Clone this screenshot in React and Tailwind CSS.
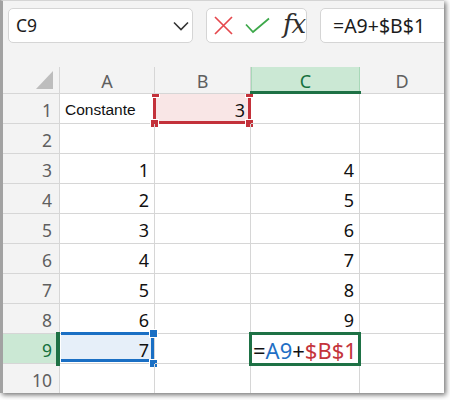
import React from "react";

const GRID = "border-[#d6d6d6]";
const NUM = "font-['Noto_Sans',sans-serif]";

function Handle({ className }) {
  return <div className={`absolute w-[9px] h-[9px] border border-white ${className}`} />;
}

const data = [
  ["Constante", "3", ""],
  ["", "", ""],
  ["1", "", "4"],
  ["2", "", "5"],
  ["3", "", "6"],
  ["4", "", "7"],
  ["5", "", "8"],
  ["6", "", "9"],
  ["7", "", "F"],
  ["", "", ""],
];

export default function App() {
  return (
    <div className="w-[450px] h-[400px] bg-white overflow-hidden">
      <div className="w-[444px] h-[393px] bg-white border-l-[3px] border-l-[#a2a2a2] border-t border-t-[#d4d4d4] shadow-[2px_2px_5px_rgba(0,0,0,0.55)] overflow-hidden flex flex-col">
        {/* toolbar */}
        <div className={`h-[66px] shrink-0 bg-[#f3f3f3] flex items-start pt-[7px] pl-[5px] ${NUM}`}>
          <div className="w-[185px] h-[35px] shrink-0 bg-white border border-[#d5d5d5] rounded-[5px] flex items-center justify-between pl-[7px] pr-[3px]">
            <span className="text-[17.5px] text-[#1b1b1b] leading-none">C9</span>
            <svg width="16" height="10" viewBox="0 0 16 10">
              <path d="M1 1.5 L8 8.5 L15 1.5" fill="none" stroke="#333" strokeWidth="1.6" />
            </svg>
          </div>
          <div className="ml-[13px] w-[101px] h-[35px] shrink-0 bg-white border border-[#d5d5d5] rounded-[5px] flex items-center pl-[7px]">
            <svg width="19" height="19" viewBox="0 0 19 19">
              <path d="M1 1 L18 18 M18 1 L1 18" fill="none" stroke="#e5484d" strokeWidth="1.7" />
            </svg>
            <svg width="25" height="17" viewBox="0 0 25 17" className="ml-[12px]">
              <path d="M1 7.5 L8 15 L24 1.5" fill="none" stroke="#3da84a" strokeWidth="1.7" />
            </svg>
            <span className="ml-[13px] text-[26px] italic text-[#2e2e2e] font-['DejaVu_Serif',serif] leading-none -mt-[3px] tracking-[-1px]">fx</span>
          </div>
          <div className="ml-[13px] w-[160px] h-[35px] shrink-0 bg-white border border-[#d5d5d5] rounded-[5px] flex items-center pl-[12px]">
            <span className="text-[19.5px] text-[#1b1b1b] leading-none">=A9+$B$1</span>
          </div>
        </div>

        {/* column header */}
        <div className={`flex h-[27px] shrink-0 bg-[#f3f3f3] text-[18px] text-[#5f5f5f] ${NUM}`}>
          <div className={`relative w-[57px] shrink-0 border-r border-b ${GRID}`}>
            <svg className="absolute left-[33px] top-[4px]" width="17" height="18" viewBox="0 0 17 18">
              <polygon points="17,0 17,18 0,18" fill="#bdbdbd" />
            </svg>
          </div>
          <div className={`w-[95px] shrink-0 border-r border-b ${GRID} flex items-center justify-center pt-[2px]`}>A</div>
          <div className={`w-[96px] shrink-0 border-r border-b ${GRID} flex items-center justify-center pt-[2px]`}>B</div>
          <div className="relative w-[109px] shrink-0 bg-[#cbe8d4] border-x border-[#a8d8b8] text-[#14713d] flex items-center justify-center pt-[2px]">
            C
            <div className="absolute left-[-2px] right-[-2px] top-[24px] h-[3px] bg-[#1e7145]" />
          </div>
          <div className={`flex-1 border-b ${GRID} flex items-center justify-center pt-[2px]`}>D</div>
        </div>

        {/* rows */}
        {data.map((r, i) => {
          const n = i + 1;
          const sel = n === 9;
          return (
            <div key={n} className={`flex h-[30px] shrink-0 ${NUM}`}>
              <div
                className={`relative w-[57px] shrink-0 border-r border-b ${GRID} flex items-center justify-end pr-[7px] pt-[3px] text-[17.5px] ${
                  sel ? "bg-[#cbe8d4] text-[#14713d]" : "bg-[#f3f3f3] text-[#5f5f5f]"
                }`}
              >
                {n}
                {sel && <div className="absolute right-[-1px] top-[-2px] bottom-[-3px] w-[4px] bg-[#1e7145] z-20" />}
              </div>

              {/* A */}
              <div className={`relative w-[95px] shrink-0 border-r border-b ${GRID} flex items-center pt-[3px] ${n === 1 ? "justify-start pl-[5px]" : "justify-end pr-[5px]"}`}>
                {sel && (
                  <>
                    <div className="absolute left-[1px] right-0 top-[-2px] bottom-[1px] bg-[#e6eff9] border-t-[3px] border-b-[3px] border-r-[3px] border-[#1a6fc4]" />
                    <Handle className="right-[-4px] top-[-5px] bg-[#1a6fc4]" />
                    <Handle className="right-[-4px] top-[25px] bg-[#1a6fc4]" />
                  </>
                )}
                {n === 1 ? (
                  <span className="relative text-[15.5px] text-[#111] font-['Liberation_Sans',Arial,sans-serif]">{r[0]}</span>
                ) : (
                  <span className="relative text-[18px] text-[#111]">{r[0]}</span>
                )}
              </div>

              {/* B */}
              <div className={`relative w-[96px] shrink-0 border-r border-b ${GRID} flex items-center justify-end pr-[5px] pt-[3px]`}>
                {n === 1 && (
                  <>
                    <div className="absolute left-[-2px] right-[-1px] top-0 bottom-[-1px] bg-[#f9e6e6] border-l-[3px] border-r-[3px] border-b-[3px] border-[#c3313a]" />
                    <div className="absolute left-[-4px] top-0 w-[9px] h-[4px] bg-[#c3313a] border-x border-b border-white" />
                    <div className="absolute right-[-4px] top-0 w-[9px] h-[4px] bg-[#c3313a] border-x border-b border-white" />
                    <Handle className="left-[-5px] top-[25px] bg-[#c3313a]" />
                    <Handle className="right-[-4px] top-[25px] bg-[#c3313a]" />
                  </>
                )}
                <span className="relative text-[18px] text-[#111]">{r[1]}</span>
              </div>

              {/* C */}
              <div className={`relative w-[109px] shrink-0 border-r border-b ${GRID} flex items-center justify-end pr-[5px] pt-[3px]`}>
                {r[2] === "F" ? (
                  <div className="absolute left-[-2px] right-[-2px] top-[-2px] bottom-[-3px] border-[3px] border-[#1e7145] bg-white z-10 flex items-center pl-[1px] pt-[1px]">
                    <span className="text-[22px] leading-none">
                      <span className="text-[#111]">=</span>
                      <span className="text-[#1f6fc5]">A9</span>
                      <span className="text-[#111]">+</span>
                      <span className="text-[#c4343b]">$B$1</span>
                    </span>
                  </div>
                ) : (
                  <span className="text-[18px] text-[#111]">{r[2]}</span>
                )}
              </div>

              {/* D */}
              <div className={`flex-1 border-b ${GRID}`} />
            </div>
          );
        })}
      </div>
    </div>
  );
}
